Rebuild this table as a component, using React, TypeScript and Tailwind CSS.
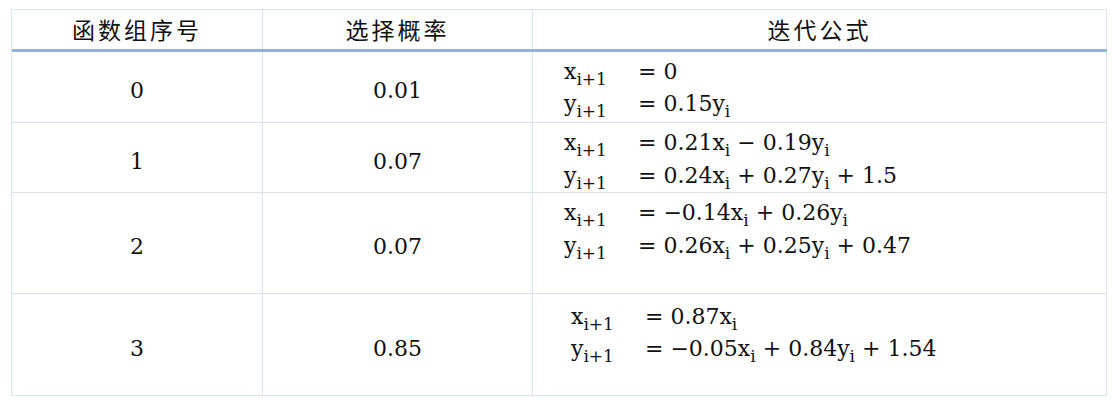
import React from "react";

const serif = { fontFamily: '"DejaVu Serif", "Liberation Serif", serif' };
const cjk = { fontFamily: '"Noto Sans CJK SC", "Noto Sans", sans-serif' };

function Sub({ children }: { children: React.ReactNode }) {
  return <span className="relative top-[6px] text-[17px] leading-none">{children}</span>;
}

type Part = string | { v: string };

function Rhs({ parts }: { parts: Part[] }) {
  return (
    <span>
      {parts.map((p, i) =>
        typeof p === "string" ? (
          <span key={i} className="whitespace-pre">{p}</span>
        ) : (
          <span key={i}>
            {p.v}
            <Sub>i</Sub>
          </span>
        )
      )}
    </span>
  );
}

function Eq({
  lines,
  lhsW,
  pad,
  pt,
  lh,
}: {
  lines: { v: string; rhs: Part[] }[];
  lhsW: string;
  pad: string;
  pt: string;
  lh: string;
}) {
  return (
    <div className={`flex flex-col ${pad} ${pt}`}>
      {lines.map((l, i) => (
        <div key={i} className={`flex ${lh} whitespace-nowrap`}>
          <div className={lhsW}>
            {l.v}
            <Sub>i+1</Sub>
          </div>
          <Rhs parts={l.rhs} />
        </div>
      ))}
    </div>
  );
}

const bc = "border-[#d9e4f1]";

export default function App() {
  const rows = [
    {
      n: "0",
      p: "0.01",
      h: "h-[71px]",
      eq: (
        <Eq
          lhsW="w-[74px]"
          pad="pl-[31px]"
          pt="pt-[4px]"
          lh="h-[32px] leading-[32px]"
          lines={[
            { v: "x", rhs: ["= 0"] },
            { v: "y", rhs: ["= 0.15", { v: "y" }] },
          ]}
        />
      ),
    },
    {
      n: "1",
      p: "0.07",
      h: "h-[70px]",
      eq: (
        <Eq
          lhsW="w-[74px]"
          pad="pl-[31px]"
          pt="pt-[3px]"
          lh="h-[33px] leading-[33px]"
          lines={[
            { v: "x", rhs: ["= 0.21", { v: "x" }, " − 0.19", { v: "y" }] },
            { v: "y", rhs: ["= 0.24", { v: "x" }, " + 0.27", { v: "y" }, " + 1.5"] },
          ]}
        />
      ),
    },
    {
      n: "2",
      p: "0.07",
      h: "h-[101px]",
      eq: (
        <Eq
          lhsW="w-[74px]"
          pad="pl-[31px]"
          pt="pt-[3px]"
          lh="h-[33px] leading-[33px]"
          lines={[
            { v: "x", rhs: ["= −0.14", { v: "x" }, " + 0.26", { v: "y" }] },
            { v: "y", rhs: ["= 0.26", { v: "x" }, " + 0.25", { v: "y" }, " + 0.47"] },
          ]}
        />
      ),
    },
    {
      n: "3",
      p: "0.85",
      h: "h-[102px]",
      eq: (
        <Eq
          lhsW="w-[74px]"
          pad="pl-[38px]"
          pt="pt-[7px]"
          lh="h-[32px] leading-[32px]"
          lines={[
            { v: "x", rhs: ["= 0.87", { v: "x" }] },
            { v: "y", rhs: ["= −0.05", { v: "x" }, " + 0.84", { v: "y" }, " + 1.54"] },
          ]}
        />
      ),
    },
  ];

  return (
    <div className="w-[1114px] h-[405px] bg-white pt-[9px] pl-[11px] text-[#111]">
      <div className={`w-[1096px] border-l border-t ${bc}`}>
        <div className="grid grid-cols-[251px_270px_574px] h-[42px] border-b-[3px] border-b-[#95b3d7]">
          {["函数组序号", "选择概率", "迭代公式"].map((t) => (
            <div
              key={t}
              className={`border-r ${bc} flex items-center justify-center text-[23px] tracking-[3px] leading-none`}
              style={cjk}
            >
              {t}
            </div>
          ))}
        </div>
        {rows.map((r, i) => (
          <div key={i} className={`grid grid-cols-[251px_270px_574px] ${r.h}`}>
            <div className={`border-r border-b ${bc} flex items-center justify-center pt-[8px] text-[22px] leading-[32px]`} style={serif}>
              {r.n}
            </div>
            <div className={`border-r border-b ${bc} flex items-center justify-center pt-[8px] text-[22px] leading-[32px]`} style={serif}>
              {r.p}
            </div>
            <div className={`border-r border-b ${bc} text-[22px]`} style={serif}>
              {r.eq}
            </div>
          </div>
        ))}
      </div>
    </div>
  );
}
